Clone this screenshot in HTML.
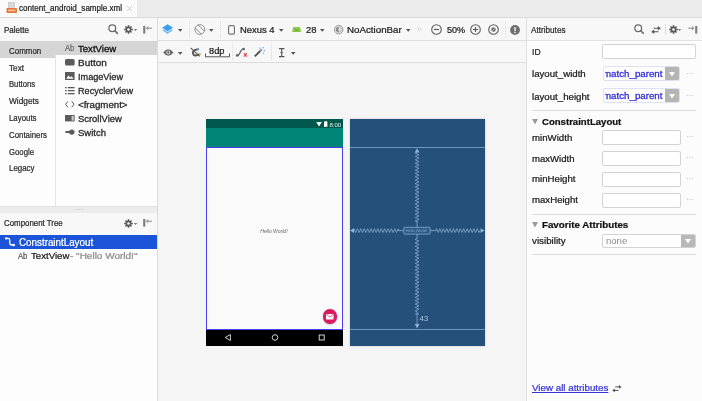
<!DOCTYPE html>
<html><head><meta charset="utf-8">
<style>
*{box-sizing:border-box;margin:0;padding:0}
html,body{width:702px;height:401px;overflow:hidden;background:#f5f5f5;font-family:"Liberation Sans",sans-serif;color:#2b2b2b;font-size:9px}
.abs{position:absolute}
#root{filter:blur(0.4px);will-change:transform;position:relative;width:702px;height:401px;overflow:hidden;background:#f5f5f5}
.t{position:absolute;white-space:nowrap;line-height:1;transform-origin:0 0}
.t,.cat{-webkit-text-stroke:0.24px currentColor}
.it{-webkit-text-stroke:0.3px currentColor}
.lab{-webkit-text-stroke:0.24px currentColor}
.cat{transform-origin:0 0;position:absolute;left:9px;font-size:8.5px;white-space:nowrap;line-height:1;color:#2e2e2e}
.it{transform-origin:0 0;position:absolute;left:77.5px;font-size:9.5px;letter-spacing:-0.12px;white-space:nowrap;line-height:1;color:#2a2a2a}
.lab{transform-origin:0 0;position:absolute;left:531.8px;font-size:10px;letter-spacing:-0.16px;white-space:nowrap;line-height:1;color:#1a1a1a}
.inp{position:absolute;left:602px;height:15px;background:#fff;border:1px solid #d3d3d3;border-radius:2px}
.dots{position:absolute;left:686.3px;font-size:6.6px;color:#a8a8a8;line-height:1;letter-spacing:0.2px}
.hsep{position:absolute;left:532px;width:164px;height:1px;background:#dedede}
.vdot{position:absolute;width:1px;height:18px;background-image:linear-gradient(#dadada 50%,transparent 50%);background-size:1px 2px}
svg{position:absolute;overflow:visible}
</style></head><body><div id="root">

<!-- ===== tab bar ===== -->
<div class="abs" style="left:0;top:0;width:702px;height:17px;background:#ebebeb"></div>
<div class="abs" style="left:0;top:0;width:137px;height:17px;background:#fbfbfb"></div>
<div class="abs" style="left:0;top:17px;width:702px;height:1.2px;background:#dadada"></div>
<svg style="left:6.3px;top:2.4px" width="12" height="12" viewBox="0 0 12 12"><rect x="2.5" y="0.5" width="6" height="7" fill="#d9d9d9" stroke="#bdbdbd" stroke-width=".6"/><rect x="0.5" y="6" width="10.5" height="5" rx="0.8" fill="#e8763a"/><rect x="2" y="7.6" width="7.5" height="1.6" fill="#f6c3a4"/></svg>
<div class="t" style="top:4.02px;font-size:8.8px;letter-spacing:0;transform:scaleX(0.917);left:19px;color:#1f1f1f">content_android_sample.xml</div>
<svg style="left:127px;top:6px" width="5" height="5" viewBox="0 0 5 5"><path d="M0 0L5 5M5 0L0 5" stroke="#c4c4c4" stroke-width=".8"/></svg>

<!-- ===== left panel ===== -->
<div class="abs" style="left:0;top:18px;width:157px;height:383px;background:#fdfdfd"></div>
<div class="abs" style="left:0;top:18px;width:157px;height:23px;background:#f8f8f8"></div>
<div class="abs" style="left:157px;top:18px;width:1px;height:383px;background:#dcdcdc"></div>
<div class="t" style="top:25.85px;font-size:8.5px;letter-spacing:0;transform:scaleX(0.945);left:4px">Palette</div>
<!-- palette header icons -->
<svg style="left:108px;top:24.4px" width="11" height="11" viewBox="0 0 11 11"><circle cx="4.3" cy="4.3" r="3.4" fill="none" stroke="#6a6a6a" stroke-width="1.25"/><path d="M6.9 6.9L9.4 9.4" stroke="#6a6a6a" stroke-width="1.6" stroke-linecap="round"/></svg>
<svg style="left:124px;top:25px" width="9" height="9" viewBox="-4.5 -4.5 9 9"><g fill="#5a5a5a"><circle r="2.9"/><rect x="-0.8" y="-4.3" width="1.6" height="8.6"/><rect x="-0.8" y="-4.3" width="1.6" height="8.6" transform="rotate(45)"/><rect x="-0.8" y="-4.3" width="1.6" height="8.6" transform="rotate(90)"/><rect x="-0.8" y="-4.3" width="1.6" height="8.6" transform="rotate(135)"/></g><circle r="1.3" fill="#f8f8f8"/></svg>
<svg style="left:134px;top:29.3px" width="3.2" height="2.4" viewBox="0 0 4 3"><path d="M0 0H4L2 2.4Z" fill="#707070"/></svg>
<svg style="left:143px;top:24.5px" width="10" height="10" viewBox="0 0 10 10"><rect x="0.2" y="1" width="2.1" height="7.6" fill="#7c7c7c"/><path d="M3.5 3.2H9M3.5 3.2L5.3 1.6M3.5 3.2L5.3 4.8" stroke="#777" stroke-width=".9" fill="none"/></svg>

<!-- palette categories -->
<div class="abs" style="left:0;top:41px;width:157px;height:14px;background:#d5d5d5"></div>
<div class="abs" style="left:0;top:41px;width:55px;height:16.5px;background:#d5d5d5"></div>
<div class="abs" style="left:55px;top:55px;width:1px;height:152px;background:#e4e4e4"></div>
<div class="cat" style="top:46.75px;font-size:8.5px;letter-spacing:0;transform:scaleX(0.934)">Common</div>
<div class="cat" style="top:63.55px;font-size:8.5px;letter-spacing:0;transform:scaleX(0.962)">Text</div>
<div class="cat" style="top:80.35px;font-size:8.5px;letter-spacing:0;transform:scaleX(0.902)">Buttons</div>
<div class="cat" style="top:97.15px;font-size:8.5px;letter-spacing:0;transform:scaleX(0.977)">Widgets</div>
<div class="cat" style="top:113.95px;font-size:8.5px;letter-spacing:0;transform:scaleX(0.924)">Layouts</div>
<div class="cat" style="top:130.75px;font-size:8.5px;letter-spacing:0;transform:scaleX(0.924)">Containers</div>
<div class="cat" style="top:147.55px;font-size:8.5px;letter-spacing:0;transform:scaleX(0.912)">Google</div>
<div class="cat" style="top:164.35px;font-size:8.5px;letter-spacing:0;transform:scaleX(0.930)">Legacy</div>

<!-- palette items -->
<div class="t" style="top:44.03px;font-size:9.0px;letter-spacing:0;transform:scaleX(0.845);left:64.5px;color:#666">Ab</div>
<div class="it" style="top:44.52px;font-size:9.3px;letter-spacing:0;transform:scaleX(1.031);color:#111">TextView</div>
<div class="it" style="top:58.52px;font-size:9.3px;letter-spacing:0;transform:scaleX(1.075)">Button</div>
<div class="it" style="top:72.52px;font-size:9.3px;letter-spacing:0;transform:scaleX(0.982)">ImageView</div>
<div class="it" style="top:86.52px;font-size:9.3px;letter-spacing:0;transform:scaleX(0.979)">RecyclerView</div>
<div class="it" style="top:100.52px;font-size:9.3px;letter-spacing:0;transform:scaleX(1.041)">&lt;fragment&gt;</div>
<div class="it" style="top:114.52px;font-size:9.3px;letter-spacing:0;transform:scaleX(1.012)">ScrollView</div>
<div class="it" style="top:128.52px;font-size:9.3px;letter-spacing:0;transform:scaleX(1.022)">Switch</div>
<!-- item icons -->
<svg style="left:64.5px;top:59px" width="10" height="7" viewBox="0 0 10 7"><rect x="0" y="0" width="9.6" height="6.4" rx="1.5" fill="#5b5b5b"/></svg>
<svg style="left:64.5px;top:72.3px" width="10" height="8" viewBox="0 0 10 8"><rect x="0" y="0" width="9.6" height="8" fill="#5b5b5b"/><path d="M1.2 6.8L3.6 3.6L5.2 5.4L6.6 4.2L8.6 6.8Z" fill="#fff"/><rect x="1.2" y="1.1" width="7.3" height="1" fill="#5b5b5b"/></svg>
<svg style="left:64.5px;top:87px" width="10" height="8" viewBox="0 0 10 8"><g fill="#5b5b5b"><rect x="0" y="0" width="1.6" height="1.3"/><rect x="2.8" y="0" width="6.8" height="1.3"/><rect x="0" y="3" width="1.6" height="1.3"/><rect x="2.8" y="3" width="6.8" height="1.3"/><rect x="0" y="6" width="1.6" height="1.3"/><rect x="2.8" y="6" width="6.8" height="1.3"/></g></svg>
<svg style="left:64.5px;top:101px" width="10" height="7" viewBox="0 0 10 7"><path d="M2.8 0.4L0.6 3.3L2.8 6.2M6.8 0.4L9 3.3L6.8 6.2" stroke="#5b5b5b" stroke-width="1" fill="none"/></svg>
<svg style="left:64.5px;top:115px" width="10" height="7" viewBox="0 0 10 7"><rect x="0" y="0" width="9.6" height="6.4" fill="#5b5b5b"/><rect x="6.6" y="0.9" width="2.1" height="4.6" fill="#cfcfcf"/></svg>
<svg style="left:64.5px;top:129px" width="10" height="7" viewBox="0 0 10 7"><rect x="0.2" y="2.1" width="5" height="1.9" rx=".9" fill="#5b5b5b"/><circle cx="6.8" cy="3.1" r="2.7" fill="#5b5b5b"/></svg>

<!-- splitter -->
<div class="abs" style="left:0;top:206.5px;width:157px;height:6px;background:#ececec"></div>
<div class="abs" style="left:0;top:206.3px;width:157px;height:1px;background:#e0e0e0"></div>
<div class="abs" style="left:74px;top:208.7px;width:10px;height:1.6px;background:#dcdcdc"></div>

<!-- component tree -->
<div class="abs" style="left:0;top:213px;width:157px;height:21px;background:#f8f8f8"></div>
<div class="t" style="top:218.95px;font-size:8.5px;letter-spacing:0;transform:scaleX(0.927);left:4px">Component Tree</div>
<svg style="left:124px;top:218.5px" width="9" height="9" viewBox="-4.5 -4.5 9 9"><g fill="#5a5a5a"><circle r="2.9"/><rect x="-0.8" y="-4.3" width="1.6" height="8.6"/><rect x="-0.8" y="-4.3" width="1.6" height="8.6" transform="rotate(45)"/><rect x="-0.8" y="-4.3" width="1.6" height="8.6" transform="rotate(90)"/><rect x="-0.8" y="-4.3" width="1.6" height="8.6" transform="rotate(135)"/></g><circle r="1.3" fill="#f8f8f8"/></svg>
<svg style="left:134px;top:222.6px" width="3.2" height="2.4" viewBox="0 0 4 3"><path d="M0 0H4L2 2.4Z" fill="#707070"/></svg>
<svg style="left:143px;top:218px" width="10" height="10" viewBox="0 0 10 10"><rect x="0.2" y="1" width="2.1" height="7.6" fill="#7c7c7c"/><path d="M3.5 3.2H9M3.5 3.2L5.3 1.6M3.5 3.2L5.3 4.8" stroke="#777" stroke-width=".9" fill="none"/></svg>
<div class="abs" style="left:0;top:235px;width:157px;height:13.5px;background:#1b53d9"></div>
<svg style="left:4.6px;top:237.4px" width="11" height="10" viewBox="0 0 11 10"><path d="M1.2 1.4H3Q4.8 1.4 4.8 3.2V6Q4.8 8 6.8 8H8.6" stroke="#fff" stroke-width="1.3" fill="none"/><circle cx="1.2" cy="1.4" r="1.2" fill="#fff"/><circle cx="8.8" cy="8" r="1.2" fill="#fff"/></svg>
<div class="t" style="top:238.25px;font-size:10.0px;letter-spacing:0;transform:scaleX(0.981);left:18.5px;color:#fff">ConstraintLayout</div>
<div class="t" style="top:252.13px;font-size:9.0px;letter-spacing:0;transform:scaleX(0.845);left:17.5px;color:#555">Ab</div>
<div class="t" style="top:252.14px;font-size:9.3px;letter-spacing:0;transform:scaleX(1.037);left:31px;color:#1a1a1a">TextView</div>
<div class="t" style="top:252.14px;font-size:9.3px;letter-spacing:0;transform:scaleX(1.075);left:70px;color:#8c8c8c">- "Hello World!"</div>

<!-- ===== toolbars ===== -->
<div class="abs" style="left:158px;top:18px;width:368px;height:23px;background:#f7f7f7"></div>
<div class="abs" style="left:158px;top:40.1px;width:368px;height:1px;background:#dedede"></div>
<div class="abs" style="left:158px;top:41.5px;width:368px;height:21px;background:#f7f7f7"></div>
<div class="abs" style="left:158px;top:62.2px;width:368px;height:1px;background:#dcdcdc"></div>


<!-- row 1 icons -->
<svg style="left:162.3px;top:24.3px" width="12" height="11" viewBox="0 0 12 11"><path d="M5.6 0.2L11 3.7L5.6 7.2L0.2 3.7Z" fill="#3a9dee"/><path d="M0.2 6.1L1.7 5.2L5.6 7.9L9.5 5.2L11 6.1L5.6 10Z" fill="#74baf3"/></svg>
<svg style="left:178px;top:29.3px" width="4.5" height="3.4" viewBox="0 0 4 3"><path d="M0 0H4L2 2.4Z" fill="#505050"/></svg>
<div class="vdot" style="left:189px;top:20.5px"></div>
<svg style="left:193.5px;top:24px" width="12" height="11" viewBox="0 0 12 11"><circle cx="5.8" cy="5.5" r="4.9" fill="none" stroke="#7a7a7a" stroke-width=".8"/><path d="M4.15 0.9L10.4 7.15M1.2 3.85L7.45 10.1" stroke="#7a7a7a" stroke-width=".85"/></svg>
<svg style="left:209px;top:29.3px" width="4.5" height="3.4" viewBox="0 0 4 3"><path d="M0 0H4L2 2.4Z" fill="#505050"/></svg>
<div class="vdot" style="left:220px;top:20.5px"></div>
<svg style="left:227.8px;top:25px" width="7" height="10" viewBox="0 0 7 10"><rect x="0.6" y="0.6" width="5.8" height="8.6" rx="1.1" fill="#fafafa" stroke="#777" stroke-width="1.2"/></svg>
<div class="t" style="top:25.54px;font-size:9.3px;letter-spacing:0;transform:scaleX(1.014);left:239.5px;color:#222">Nexus 4</div>
<svg style="left:278.5px;top:29.3px" width="4.5" height="3.4" viewBox="0 0 4 3"><path d="M0 0H4L2 2.4Z" fill="#505050"/></svg>
<svg style="left:292px;top:27.2px" width="10" height="5" viewBox="0 0 10 5"><path d="M1.2 0H8L9.2 5H0Z" fill="#8ecb4c"/><path d="M2.6 1.6L4.6 3.4L6.6 1.6M2.4 3.6H6.8" stroke="#5da130" stroke-width=".8" fill="none" opacity=".75"/></svg>
<div class="t" style="top:25.54px;font-size:9.3px;letter-spacing:0;transform:scaleX(1.015);left:305.5px;color:#222">28</div>
<svg style="left:320px;top:29.3px" width="4.5" height="3.4" viewBox="0 0 4 3"><path d="M0 0H4L2 2.4Z" fill="#505050"/></svg>
<svg style="left:333.5px;top:25px" width="10" height="10" viewBox="0 0 10 10"><circle cx="4.7" cy="4.6" r="4.2" fill="none" stroke="#777" stroke-width=".8"/><circle cx="4.7" cy="4.6" r="2.6" fill="none" stroke="#888" stroke-width=".7"/><path d="M4.7 2A2.6 2.6 0 0 0 4.7 7.2Z" fill="#888"/></svg>
<div class="t" style="top:25.54px;font-size:9.3px;letter-spacing:0;transform:scaleX(1.050);left:346.5px;color:#222">NoActionBar</div>
<svg style="left:405.8px;top:29.3px" width="4.5" height="3.4" viewBox="0 0 4 3"><path d="M0 0H4L2 2.4Z" fill="#505050"/></svg>
<svg style="left:417px;top:27.2px" width="5" height="4" viewBox="0 0 6 5"><path d="M0.5 0.5L2.3 2.5L0.5 4.5M3.3 0.5L5.1 2.5L3.3 4.5" stroke="#b5b5b5" stroke-width=".7" fill="none"/></svg>
<svg style="left:431px;top:24.2px" width="11" height="11" viewBox="0 0 11 11"><circle cx="5.5" cy="5.5" r="4.8" fill="none" stroke="#5c5c5c" stroke-width="1.1"/><path d="M2.9 5.5H8.1" stroke="#5c5c5c" stroke-width="1.2"/></svg>
<div class="t" style="top:25.54px;font-size:9.3px;letter-spacing:0;transform:scaleX(0.978);left:446.5px;color:#222">50%</div>
<svg style="left:470.3px;top:24.2px" width="11" height="11" viewBox="0 0 11 11"><circle cx="5.5" cy="5.5" r="4.8" fill="none" stroke="#5c5c5c" stroke-width="1.1"/><path d="M2.9 5.5H8.1M5.5 2.9V8.1" stroke="#5c5c5c" stroke-width="1.2"/></svg>
<svg style="left:487.6px;top:24.2px" width="11" height="11" viewBox="0 0 11 11"><circle cx="5.5" cy="5.5" r="4.8" fill="none" stroke="#5c5c5c" stroke-width="1.1"/><circle cx="5.5" cy="5.5" r="2.2" fill="#6a6a6a"/><path d="M4.3 6.7L6.7 4.3" stroke="#f7f7f7" stroke-width=".7"/></svg>
<div class="vdot" style="left:504.5px;top:20.5px"></div>
<svg style="left:510px;top:24.5px" width="10" height="10" viewBox="0 0 10 10"><circle cx="5" cy="5" r="4.9" fill="#6f6f6f"/><rect x="4.3" y="2" width="1.4" height="4" fill="#f7f7f7"/><rect x="4.3" y="6.8" width="1.4" height="1.4" fill="#f7f7f7"/></svg>

<!-- row 2 icons -->
<svg style="left:163px;top:48.6px" width="11" height="7" viewBox="0 0 11 7"><path d="M0.2 3.5Q5.3 -3.2 10.4 3.5Q5.3 10.2 0.2 3.5Z" fill="#666"/><circle cx="5.3" cy="3.5" r="1.9" fill="#f7f7f7"/><circle cx="5.3" cy="3.5" r="1.15" fill="#5a5a5a"/></svg>
<svg style="left:178px;top:51.9px" width="4.5" height="3.4" viewBox="0 0 4 3"><path d="M0 0H4L2 2.4Z" fill="#505050"/></svg>
<svg style="left:189.5px;top:47px" width="11" height="10" viewBox="0 0 11 10"><g transform="rotate(72 5.2 5.8)"><path d="M2.6 2.4V5.4A2.7 2.7 0 0 0 8 5.4V2.4" fill="none" stroke="#585858" stroke-width="1.9"/><rect x="1.65" y="1" width="1.9" height="1.5" fill="#3d8fe0"/><rect x="7.05" y="1" width="1.9" height="1.5" fill="#c9a15a"/></g><path d="M0.6 0.8L9.8 9.4" stroke="#585858" stroke-width="1.1"/></svg>
<div class="t" style="top:46.96px;font-size:8.9px;letter-spacing:0;transform:scaleX(1.044);left:209px;color:#222">8dp</div>
<svg style="left:204.5px;top:52.8px" width="25" height="5" viewBox="0 0 25 5"><path d="M0.5 0.5V3.8H24.5V0.5" fill="none" stroke="#444" stroke-width=".9"/></svg>
<div class="vdot" style="left:231.5px;top:43px"></div>
<svg style="left:236.2px;top:47px" width="12" height="10" viewBox="0 0 12 10"><path d="M1.2 8.4C5 8.4 3.4 2 7.4 2" fill="none" stroke="#606060" stroke-width="1.2"/><circle cx="1.3" cy="8.4" r="1.35" fill="#606060"/><circle cx="7.6" cy="2" r="1.35" fill="#606060"/><path d="M7.8 6.2L11 9.6M11 6.2L7.8 9.6" stroke="#d8434a" stroke-width="1.1"/></svg>
<svg style="left:254px;top:47px" width="11" height="10" viewBox="0 0 11 10"><path d="M0.8 9.4L6.2 4" stroke="#555" stroke-width="2"/><path d="M6.2 4L7.8 2.4" stroke="#8a8a8a" stroke-width="2"/><g fill="#3d8fe0"><rect x="8.6" y="0.2" width="1.1" height="1.1"/><rect x="9.8" y="3.2" width="1.1" height="1.1"/><rect x="5.4" y="0.6" width="1.1" height="1.1"/><rect x="8.8" y="5.6" width="1" height="1"/></g></svg>
<div class="vdot" style="left:271px;top:43px"></div>
<svg style="left:277.5px;top:47.5px" width="8" height="10" viewBox="0 0 8 10"><path d="M1 0.6H6.4M1 8.6H6.4M3.7 0.6V8.6" stroke="#555" stroke-width="1.1" fill="none"/><path d="M2.2 4.6H5.2" stroke="#555" stroke-width=".8"/></svg>
<svg style="left:291px;top:51.9px" width="4.5" height="3.4" viewBox="0 0 4 3"><path d="M0 0H4L2 2.4Z" fill="#505050"/></svg>

<!-- ===== right panel ===== -->
<div class="abs" style="left:526px;top:18px;width:176px;height:383px;background:#fcfcfc"></div>
<div class="abs" style="left:526px;top:18px;width:1px;height:383px;background:#e0e0e0"></div>
<div class="abs" style="left:527px;top:18px;width:175px;height:22px;background:#f8f8f8"></div>
<div class="abs" style="left:527px;top:40px;width:175px;height:1px;background:#e2e2e2"></div>
<div class="t" style="top:26.05px;font-size:8.5px;letter-spacing:0;transform:scaleX(0.961);left:531px">Attributes</div>


<!-- attributes header icons -->
<svg style="left:634px;top:23.8px" width="11" height="11" viewBox="0 0 11 11"><circle cx="4.2" cy="4.2" r="3.4" fill="none" stroke="#6a6a6a" stroke-width="1.25"/><path d="M6.8 6.8L9.3 9.3" stroke="#6a6a6a" stroke-width="1.6" stroke-linecap="round"/></svg>
<svg style="left:651px;top:26px" width="10" height="8" viewBox="0 0 10 8"><path d="M2.6 2.2H7.4M7.4 5.8H2.6" stroke="#555" stroke-width="1.1" fill="none"/><path d="M6.8 0L9.8 2.2L6.8 4.4ZM3.2 3.6L0.2 5.8L3.2 8Z" fill="#555"/></svg>
<div class="abs" style="left:665px;top:24px;width:1px;height:11px;background:#dcdcdc"></div>
<svg style="left:668.5px;top:25px" width="9" height="9" viewBox="-4.5 -4.5 9 9"><g fill="#5a5a5a"><circle r="2.9"/><rect x="-0.8" y="-4.3" width="1.6" height="8.6"/><rect x="-0.8" y="-4.3" width="1.6" height="8.6" transform="rotate(45)"/><rect x="-0.8" y="-4.3" width="1.6" height="8.6" transform="rotate(90)"/><rect x="-0.8" y="-4.3" width="1.6" height="8.6" transform="rotate(135)"/></g><circle r="1.3" fill="#f8f8f8"/></svg>
<svg style="left:678px;top:29.3px" width="3.2" height="2.4" viewBox="0 0 4 3"><path d="M0 0H4L2 2.4Z" fill="#707070"/></svg>
<svg style="left:688px;top:24.5px" width="10" height="10" viewBox="0 0 10 10"><rect x="7.2" y="1" width="2.1" height="7.6" fill="#7c7c7c"/><path d="M0.3 3.2H5.8M5.8 3.2L4 1.6M5.8 3.2L4 4.8" stroke="#777" stroke-width=".9" fill="none"/></svg>

<div class="lab" style="top:48.04px;font-size:9.3px;letter-spacing:0;transform:scaleX(0.925)">ID</div>
<div class="inp" style="top:44.3px;width:94px;height:15.2px"></div>

<div class="lab" style="top:69.74px;font-size:9.3px;letter-spacing:0;transform:scaleX(1.040)">layout_width</div>
<div class="inp" style="top:66px;width:77.4px;margin-left:.5px;border-color:#dde1f3;overflow:hidden"><div class="abs" style="left:1.8px;top:0;width:62px;height:13px;overflow:hidden"><div class="t" style="top:3.04px;font-size:9.3px;letter-spacing:0;transform:scaleX(1.046);left:-2px;color:#322fd6;-webkit-text-stroke:0.3px #322fd6">match_parent</div></div><div class="abs" style="right:0;top:0;width:13.8px;height:13px;background:#b5b5b5;border-radius:0 1px 1px 0"></div><svg style="right:3.5px;top:4.5px" width="6" height="5" viewBox="0 0 6 5"><path d="M0 0H6L3 4.4Z" fill="#fff"/></svg></div>
<div class="dots" style="top:70.8px">···</div>

<div class="lab" style="top:92.74px;font-size:9.3px;letter-spacing:0;transform:scaleX(1.039)">layout_height</div>
<div class="inp" style="top:88px;width:77.4px;margin-left:.5px;border-color:#dde1f3;overflow:hidden"><div class="abs" style="left:1.8px;top:0;width:62px;height:13px;overflow:hidden"><div class="t" style="top:3.04px;font-size:9.3px;letter-spacing:0;transform:scaleX(1.046);left:-2px;color:#322fd6;-webkit-text-stroke:0.3px #322fd6">match_parent</div></div><div class="abs" style="right:0;top:0;width:13.8px;height:13px;background:#b5b5b5;border-radius:0 1px 1px 0"></div><svg style="right:3.5px;top:4.5px" width="6" height="5" viewBox="0 0 6 5"><path d="M0 0H6L3 4.4Z" fill="#fff"/></svg></div>
<div class="dots" style="top:92.8px">···</div>

<div class="hsep" style="top:110px"></div>
<svg style="left:532px;top:118.7px" width="6" height="6" viewBox="0 0 6 6"><path d="M0 0H6L3 5.6Z" fill="#9a9a9a"/></svg>
<div class="t" style="top:117.17px;font-size:9.5px;letter-spacing:0;transform:scaleX(1.008);left:541.5px;font-weight:bold;color:#111">ConstraintLayout</div>

<div class="lab" style="top:133.64px;font-size:9.3px;letter-spacing:0;transform:scaleX(1.039)">minWidth</div>
<div class="inp" style="top:130px;width:78.5px"></div>
<div class="dots" style="top:134.0px">···</div>
<div class="lab" style="top:154.54px;font-size:9.3px;letter-spacing:0;transform:scaleX(1.028)">maxWidth</div>
<div class="inp" style="top:150.9px;width:78.5px"></div>
<div class="dots" style="top:154.9px">···</div>
<div class="lab" style="top:175.34px;font-size:9.3px;letter-spacing:0;transform:scaleX(1.039)">minHeight</div>
<div class="inp" style="top:171.7px;width:78.5px"></div>
<div class="dots" style="top:175.7px">···</div>
<div class="lab" style="top:196.24px;font-size:9.3px;letter-spacing:0;transform:scaleX(1.035)">maxHeight</div>
<div class="inp" style="top:192.6px;width:78.5px"></div>
<div class="dots" style="top:196.6px">···</div>

<div class="hsep" style="top:214px"></div>
<svg style="left:532px;top:222.4px" width="6" height="6" viewBox="0 0 6 6"><path d="M0 0H6L3 5.6Z" fill="#9a9a9a"/></svg>
<div class="t" style="top:220.17px;font-size:9.5px;letter-spacing:0;transform:scaleX(1.026);left:541.5px;font-weight:bold;color:#111">Favorite Attributes</div>
<div class="lab" style="top:236.94px;font-size:9.3px;letter-spacing:0;transform:scaleX(1.053)">visibility</div>
<div class="inp" style="top:234px;width:94px;height:14px;overflow:hidden"><div class="t" style="top:2.42px;font-size:9.3px;letter-spacing:0;transform:scaleX(1.027);left:3px;color:#8a8a8a;-webkit-text-stroke:0">none</div><div class="abs" style="right:0;top:0;width:14px;height:12px;background:#b8b8b8"></div><svg style="right:4px;top:4px" width="6" height="5" viewBox="0 0 6 5"><path d="M0 0H6L3 4.4Z" fill="#fff"/></svg></div>
<div class="hsep" style="top:254px"></div>

<div class="t" style="top:384.44px;font-size:9.3px;letter-spacing:0;transform:scaleX(1.051);left:532.3px;color:#3834d6;text-decoration:underline">View all attributes</div>
<svg style="left:611.8px;top:385.4px" width="10" height="8" viewBox="0 0 10 8"><path d="M3.2 1.9H7.4M6.6 5.4H2.4" stroke="#555" stroke-width="1" fill="none"/><path d="M6.9 0L9.6 1.9L6.9 3.8ZM2.9 3.5L0.2 5.4L2.9 7.3Z" fill="#555"/></svg>


<!-- phone design view -->
<div class="abs" style="left:206.2px;top:119px;width:136.6px;height:9px;background:#00574b"></div>
<div class="abs" style="left:206.2px;top:128px;width:136.6px;height:19.5px;background:#008577"></div>
<div class="abs" style="left:206.2px;top:147.2px;width:136.6px;height:182.7px;background:#fafafa;border:1px solid #4b3df0;border-width:0.8px 1px 1px 1px"></div>
<div class="abs" style="left:206.2px;top:329.7px;width:136.6px;height:16px;background:#000"></div>
<svg style="left:316px;top:120.5px" width="26" height="7" viewBox="0 0 26 7"><path d="M0.2 1L5.8 1L3 5.6Z" fill="#fff"/><rect x="8" y="0.6" width="3.4" height="5.2" fill="#fff"/><rect x="9" y="0" width="1.4" height="1" fill="#fff"/><text x="13.4" y="5.9" font-family="Liberation Sans" font-size="6" fill="#e8f3f1">8:00</text></svg>
<div class="t" style="left:260.3px;top:229.3px;font-size:5px;font-style:italic;color:#666;-webkit-text-stroke:0">Hello World!</div>
<!-- fab -->
<div class="abs" style="left:322.5px;top:309px;width:14.5px;height:14.5px;border-radius:50%;background:#d81b60;box-shadow:0 0.5px 1.5px rgba(0,0,0,.35)"></div>
<svg style="left:326px;top:313.5px" width="8" height="6" viewBox="0 0 8 6"><rect x="0" y="0" width="7.6" height="5.4" rx=".6" fill="#fff"/><path d="M0.3 0.4L3.8 3L7.3 0.4" stroke="#d81b60" stroke-width=".7" fill="none"/></svg>
<!-- nav -->
<svg style="left:206.5px;top:329.4px" width="136" height="17" viewBox="0 0 136 17"><path d="M18.2 8.5L23.4 5.5V11.5Z" fill="none" stroke="#e6e6e6" stroke-width=".9"/><circle cx="68" cy="8.5" r="2.8" fill="none" stroke="#e6e6e6" stroke-width=".9"/><rect x="112.2" y="6" width="5" height="5" fill="none" stroke="#e6e6e6" stroke-width=".9"/></svg>

<!-- blueprint -->
<div class="abs" style="left:349.7px;top:119px;width:135.2px;height:226.5px;box-shadow:0 0 1.5px rgba(120,140,160,.5);background:#24507a"></div>
<div class="abs" style="left:349.7px;top:147.2px;width:135.2px;height:1px;background:#6d98be"></div>
<div class="abs" style="left:349.7px;top:328.8px;width:135.2px;height:1px;background:#6d98be"></div>
<svg style="left:0;top:0" width="702" height="401" viewBox="0 0 702 401">
<g fill="none" stroke="#8db3d4" stroke-width=".75">
<path d="M417.1 152.2 L415.2 153.0 L419.0 154.7 L415.2 156.4 L419.0 158.1 L415.2 159.8 L419.0 161.5 L415.2 163.2 L419.0 164.9 L415.2 166.6 L419.0 168.3 L415.2 170.0 L419.0 171.7 L415.2 173.4 L419.0 175.1 L415.2 176.8 L419.0 178.5 L415.2 180.2 L419.0 181.9 L415.2 183.6 L419.0 185.3 L415.2 187.0 L419.0 188.7 L415.2 190.4 L419.0 192.1 L415.2 193.8 L419.0 195.5 L415.2 197.2 L419.0 198.9 L415.2 200.6 L419.0 202.3 L415.2 204.0 L419.0 205.7 L415.2 207.4 L419.0 209.1 L415.2 210.8 L419.0 212.5 L415.2 214.2 L419.0 215.9 L415.2 217.6 L419.0 219.3 L415.2 221.0 L417.1 221.8"/>
<path d="M417.1 221V227.4M417.1 234V239"/>
<path d="M417.1 238.7 L415.2 239.5 L419.0 241.2 L415.2 242.9 L419.0 244.6 L415.2 246.3 L419.0 248.0 L415.2 249.7 L419.0 251.4 L415.2 253.1 L419.0 254.8 L415.2 256.5 L419.0 258.2 L415.2 259.9 L419.0 261.6 L415.2 263.3 L419.0 265.0 L415.2 266.7 L419.0 268.4 L415.2 270.1 L419.0 271.8 L415.2 273.5 L419.0 275.2 L415.2 276.9 L419.0 278.6 L415.2 280.3 L419.0 282.0 L415.2 283.7 L419.0 285.4 L415.2 287.1 L419.0 288.8 L415.2 290.5 L419.0 292.2 L415.2 293.9 L419.0 295.6 L415.2 297.3 L419.0 299.0 L415.2 300.7 L419.0 302.4 L415.2 304.1 L419.0 305.8 L415.2 307.5 L419.0 309.2 L415.2 310.9 L417.1 311.7"/>
<path d="M353.2 230.6 L354.0 228.7 L355.7 232.5 L357.4 228.7 L359.1 232.5 L360.8 228.7 L362.5 232.5 L364.2 228.7 L365.9 232.5 L367.6 228.7 L369.3 232.5 L371.0 228.7 L372.7 232.5 L374.4 228.7 L376.1 232.5 L377.8 228.7 L379.5 232.5 L381.2 228.7 L382.9 232.5 L384.6 228.7 L386.3 232.5 L388.0 228.7 L389.7 232.5 L391.4 228.7 L393.1 232.5 L394.8 228.7 L396.5 232.5 L398.2 228.7 L399.0 230.6"/>
<path d="M398 230.6H403.8M430.2 230.6H436"/>
<path d="M435.7 230.6 L436.5 228.7 L438.2 232.5 L439.9 228.7 L441.6 232.5 L443.3 228.7 L445.0 232.5 L446.7 228.7 L448.4 232.5 L450.1 228.7 L451.8 232.5 L453.5 228.7 L455.2 232.5 L456.9 228.7 L458.6 232.5 L460.3 228.7 L462.0 232.5 L463.7 228.7 L465.4 232.5 L467.1 228.7 L468.8 232.5 L470.5 228.7 L472.2 232.5 L473.9 228.7 L475.6 232.5 L477.3 228.7 L479.0 232.5 L479.8 230.6"/>
<path d="M417.1 312V326"/>
<path d="M415.1 314H419.1" />
<rect x="403.8" y="227.3" width="26.4" height="6.8" rx=".8" fill="#2d5b87"/>
</g>
<g fill="#8db3d4">
<path d="M417.1 148.2L419.5 152.6H414.70000000000005Z"/>
<path d="M417.1 328.4L419.5 324H414.70000000000005Z"/>
<path d="M349.9 230.6L354 228.2V233.0Z"/>
<path d="M484.6 230.6L480.5 228.2V233.0Z"/>
</g>
<text x="405.8" y="232.1" font-family="Liberation Sans" font-size="3.9" fill="#9fc0dc" opacity=".7">Hello World!</text>
<text x="419.4" y="321" font-family="Liberation Sans" font-size="8" fill="#a6c4de">43</text>
</svg>

</div></body></html>
